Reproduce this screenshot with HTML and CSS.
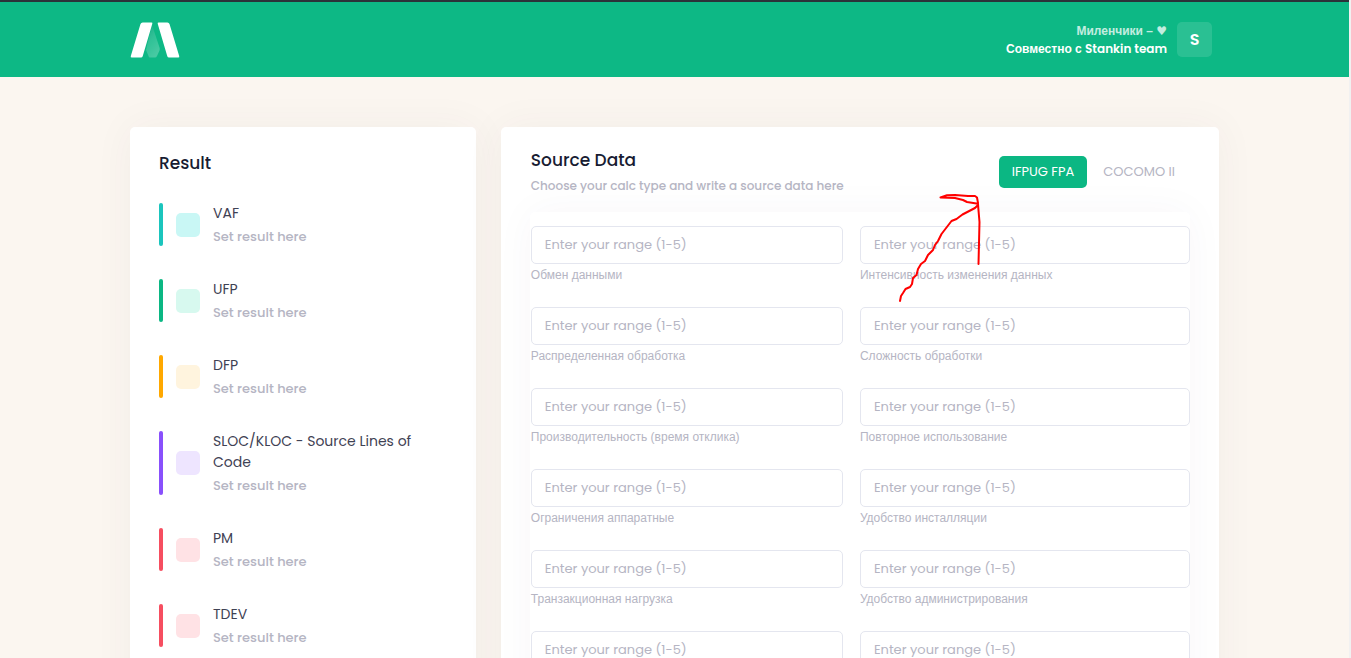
FILE: index.html
```html
<!DOCTYPE html>
<html lang="ru">
<head>
<meta charset="utf-8">
<title>Source Data</title>
<link rel="stylesheet" href="styles.css">
</head>
<body>
<header class="header">
  <div class="container header-row">
    <a class="logo" href="#" aria-label="Home">
      <svg width="50" height="36" viewBox="0 0 50 36">
        <defs><linearGradient id="drop" x1="0" y1="0" x2=".5" y2="1"><stop offset="0" stop-color="#066" stop-opacity=".3"/><stop offset=".6" stop-color="#fff" stop-opacity=".16"/><stop offset="1" stop-color="#fff" stop-opacity=".24"/></linearGradient></defs>
        <path d="M22 3L29.500 25.500Q30 27 29.500 28.500L27 34Q26.400 35.500 25 35.500H20Q18.800 35.500 18.500 34L16 28Z" fill="url(#drop)"/>
        <path d="M12.700.5H21.500Q22.700.5 22.300 1.700L12.700 34.200Q12.300 35.500 11 35.500H1.800Q.3 35.500.8 34L10.500 2Q11 .5 12.700.5Z" fill="#fff"/>
        <path d="M28.600.5H37.400Q39 .5 39.500 2L49.200 34Q49.700 35.500 48.200 35.500H39Q37.700 35.500 37.300 34.200L27.700 1.700Q27.400.5 28.600.5Z" fill="#fff"/>
      </svg>
    </a>
    <div class="user">
      <div class="user-text">
        <span class="user-name">Миленчики – <span class="heart">♥</span></span>
        <span class="user-team">Совместно с <span class="latin">Stankin team</span></span>
      </div>
      <button class="avatar" type="button">S</button>
    </div>
  </div>
</header>
<main class="container columns">
  <section class="card result">
    <h2 class="title">Result</h2>
    <ul class="list">
      <li class="item teal"><span class="bar"></span><span class="box"></span><div><p class="name">VAF</p><p class="value">Set result here</p></div></li>
      <li class="item green"><span class="bar"></span><span class="box"></span><div><p class="name">UFP</p><p class="value">Set result here</p></div></li>
      <li class="item yellow"><span class="bar"></span><span class="box"></span><div><p class="name">DFP</p><p class="value">Set result here</p></div></li>
      <li class="item purple"><span class="bar"></span><span class="box"></span><div><p class="name">SLOC/KLOC - Source Lines of Code</p><p class="value">Set result here</p></div></li>
      <li class="item red"><span class="bar"></span><span class="box"></span><div><p class="name">PM</p><p class="value">Set result here</p></div></li>
      <li class="item red"><span class="bar"></span><span class="box"></span><div><p class="name">TDEV</p><p class="value">Set result here</p></div></li>
    </ul>
  </section>
  <section class="card source">
    <div class="source-head">
      <div>
        <h2 class="title">Source Data</h2>
        <p class="subtitle">Choose your calc type and write a source data here</p>
      </div>
      <div class="tabs">
        <button class="tab active" type="button">IFPUG FPA</button>
        <button class="tab" type="button">COCOMO II</button>
      </div>
    </div>
    <form class="fields">
      <div class="field"><input id="f1" type="text" placeholder="Enter your range (1-5)"><label for="f1">Обмен данными</label></div>
      <div class="field"><input id="f2" type="text" placeholder="Enter your range (1-5)"><label for="f2">Интенсивность изменения данных</label></div>
      <div class="field"><input id="f3" type="text" placeholder="Enter your range (1-5)"><label for="f3">Распределенная обработка</label></div>
      <div class="field"><input id="f4" type="text" placeholder="Enter your range (1-5)"><label for="f4">Сложность обработки</label></div>
      <div class="field"><input id="f5" type="text" placeholder="Enter your range (1-5)"><label for="f5">Производительность (время отклика)</label></div>
      <div class="field"><input id="f6" type="text" placeholder="Enter your range (1-5)"><label for="f6">Повторное использование</label></div>
      <div class="field"><input id="f7" type="text" placeholder="Enter your range (1-5)"><label for="f7">Ограничения аппаратные</label></div>
      <div class="field"><input id="f8" type="text" placeholder="Enter your range (1-5)"><label for="f8">Удобство инсталляции</label></div>
      <div class="field"><input id="f9" type="text" placeholder="Enter your range (1-5)"><label for="f9">Транзакционная нагрузка</label></div>
      <div class="field"><input id="f10" type="text" placeholder="Enter your range (1-5)"><label for="f10">Удобство администрирования</label></div>
      <div class="field"><input id="f11" type="text" placeholder="Enter your range (1-5)" aria-label="Enter your range"></div>
      <div class="field"><input id="f12" type="text" placeholder="Enter your range (1-5)" aria-label="Enter your range"></div>
    </form>
    <svg class="arrow" width="84" height="112" viewBox="898 192 84 112" aria-hidden="true">
      <path d="M900 301L901 296L903 293L905.500 289L910 287L912 284L913 278L916.500 275L918 269L921 264L925 261L928 255L933 250L935 245L938 241L941.500 234L951.500 221L956.500 219L962.500 214.500L975 208L977.500 205.500L978 203L977 197.500L975 196L968 196L955 195L947 195.300L940.500 197.500L955 198L963 200L967 202L978 203.700L978.300 208L979.500 222L978.500 264"/>
    </svg>
  </section>
</main>
</body>
</html>
```
FILE: styles.css
```css
* { box-sizing: border-box; }
body {
  margin: 0;
  height: 100vh;
  overflow: hidden;
  background: #fbf6f0;
  border-right: 2px solid #f1f1f1;
  font-family: Poppins, Inter, "Liberation Sans", sans-serif;
  font-size: 13px;
  color: #3f4254;
}
h2, p, ul { margin: 0; padding: 0; }
ul { list-style: none; }
button, input { font: inherit; }

.container {
  width: 100%;
  max-width: 1139px;
  margin: 0 auto;
  padding: 0 25px;
}

.header {
  background: #0db885;
  border-top: 2px solid #2b3239;
}
.header-row {
  display: flex;
  align-items: center;
  justify-content: space-between;
  height: 75px;
}
.logo { display: flex; }
.user {
  display: flex;
  align-items: center;
  gap: 10px;
  padding-right: 7px;
}
.user-text {
  display: flex;
  flex-direction: column;
  text-align: right;
  font: bold 12px/18px "Liberation Sans", Arial, sans-serif;
  color: #fff;
}
.user-name { opacity: .75; }
.heart { font-family: "DejaVu Sans", sans-serif; font-weight: 400; line-height: 12px; }
.latin { font-family: Poppins, Inter, sans-serif; font-weight: 600; }
.avatar {
  width: 35px;
  height: 35px;
  padding: 0;
  border: 0;
  border-radius: 5px;
  background: rgba(255, 255, 255, .12);
  color: #fff;
  font-size: 16px;
  font-weight: 600;
}

.columns {
  display: grid;
  grid-template-columns: 13fr 27fr;
  align-items: start;
  gap: 25px;
  padding-top: 50px;
}
.card {
  min-height: 600px;
  border-radius: 5px;
  background: #fff;
  box-shadow: 0 0 40px rgba(76, 60, 80, .05);
}
.title {
  font-size: 17px;
  line-height: 24px;
  font-weight: 500;
  color: #181c32;
}

.result { padding: 24px 29px; }
.list {
  display: flex;
  flex-direction: column;
  gap: 33px;
  margin-top: 28px;
}
.item {
  display: flex;
  align-items: center;
  gap: 13px;
}
.bar {
  flex: none;
  align-self: stretch;
  width: 4px;
  border-radius: 2px;
  background: var(--main);
}
.box {
  flex: none;
  width: 24px;
  height: 24px;
  border-radius: 5px;
  background: var(--soft);
}
.name { font-size: 14px; line-height: 21px; }
.value {
  padding-top: 4px;
  line-height: 18px;
  font-weight: 500;
  color: #b5b5c3;
}
.item > div { padding-right: 30px; }
.teal { --main: #1bc5bd; --soft: #c9f7f5; }
.green { --main: #0bb783; --soft: #d7f9ef; }
.yellow { --main: #ffa800; --soft: #fff4de; }
.purple { --main: #8950fc; --soft: #eee5ff; }
.red { --main: #f64e60; --soft: #ffe2e5; }

.source {
  position: relative;
  padding: 21px 29px;
}
.source-head {
  display: flex;
  justify-content: space-between;
  gap: 20px;
  padding-left: 1px;
}
.subtitle {
  padding-top: 5px;
  font-size: 12px;
  line-height: 18px;
  font-weight: 500;
  color: #b5b5c3;
}
.tabs {
  display: flex;
  align-items: center;
  gap: 3px;
  padding-right: 2px;
}
.tab {
  height: 32px;
  padding: 0 13px;
  border: 0;
  border-radius: 5px;
  background: none;
  color: #b5b5c3;
}
.tab.active { background: #0bb783; color: #fff; }

.fields {
  display: grid;
  grid-template-columns: 52fr 55fr;
  column-gap: 17px;
  row-gap: 23px;
  margin-top: 17px;
  padding: 14px 0 30px 1px;
  border-radius: 5px;
  background: #fff;
  box-shadow: 0 0 40px rgba(82, 63, 105, .04);
}
.field { display: flex; flex-direction: column; }
.field input {
  width: 100%;
  height: 38px;
  padding: 0 13px;
  border: 1px solid #e4e6ef;
  border-radius: 5px;
  background: #fff;
  color: #3f4254;
  font-size: 13px;
}
.field input::placeholder { color: #b5b5c3; opacity: 1; }
.field label {
  padding-top: 2px;
  font: 12px/18px "Liberation Sans", Arial, sans-serif;
  color: #b5b5c3;
}

/* Hand-drawn arrow lying over the form, pointing at the tabs */
.arrow {
  position: absolute;
  top: 65px;
  right: 237px;
  pointer-events: none;
}
.arrow path {
  fill: none;
  stroke: #f00;
  stroke-width: 2;
  stroke-linecap: round;
  stroke-linejoin: round;
}
```
